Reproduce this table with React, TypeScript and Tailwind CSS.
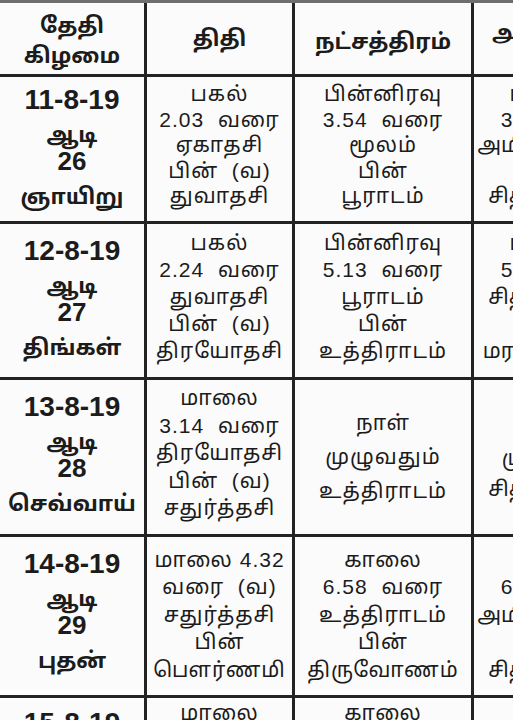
const FONT = "font-['Liberation_Sans','Noto_Sans_Tamil','Noto_Sans',sans-serif]";

type Row = {
  date: string;
  month: string;
  day: string;
  weekday: string;
  h: string;
  pt: string;
  lead: string;
  pb: string;
  thithi: string[];
  star: string[];
  yogam: string[];
  starLead?: string;
  yogamLead?: string;
  cut?: boolean;
};

const rows: Row[] = [
  {
    date: "11-8-19",
    month: "ஆடி",
    day: "26",
    weekday: "ஞாயிறு",
    h: "h-[144px]",
    pt: "pt-[8px]",
    lead: "leading-[25.5px]",
    pb: "pb-[8px]",
    thithi: ["பகல்", "2.03  வரை", "ஏகாதசி", "பின்  (வ)", "துவாதசி"],
    star: ["பின்னிரவு", "3.54  வரை", "மூலம்", "பின்", "பூராடம்"],
    yogam: ["பிற்பகல்", "3.54  வரை", "அமிர்தயோகம்", "பின்", "சித்தயோகம்"],
  },
  {
    date: "12-8-19",
    month: "ஆடி",
    day: "27",
    weekday: "திங்கள்",
    h: "h-[153px]",
    pt: "pt-[12px]",
    lead: "leading-[27px]",
    pb: "pb-[8px]",
    thithi: ["பகல்", "2.24  வரை", "துவாதசி", "பின்  (வ)", "திரயோதசி"],
    star: ["பின்னிரவு", "5.13  வரை", "பூராடம்", "பின்", "உத்திராடம்"],
    yogam: ["பிற்பகல்", "5.13  வரை", "சித்தயோகம்", "பின்", "மரணயோகம்"],
  },
  {
    date: "13-8-19",
    month: "ஆடி",
    day: "28",
    weekday: "செவ்வாய்",
    h: "h-[154px]",
    pt: "pt-[12px]",
    lead: "leading-[27.5px]",
    pb: "pb-[8px]",
    thithi: ["மாலை", "3.14  வரை", "திரயோதசி", "பின்  (வ)", "சதுர்த்தசி"],
    star: ["நாள்", "முழுவதும்", "உத்திராடம்"],
    yogam: ["நாள்", "முழுவதும்", "சித்தயோகம்"],
    starLead: "leading-[34px]",
    yogamLead: "leading-[31px]",
  },
  {
    date: "14-8-19",
    month: "ஆடி",
    day: "29",
    weekday: "புதன்",
    h: "h-[158px]",
    pt: "pt-[12px]",
    lead: "leading-[27.5px]",
    pb: "pb-[3px]",
    thithi: ["மாலை 4.32", "வரை  (வ)", "சதுர்த்தசி", "பின்", "பௌர்ணமி"],
    star: ["காலை", "6.58  வரை", "உத்திராடம்", "பின்", "திருவோணம்"],
    yogam: ["காலை", "6.58  வரை", "அமிர்தயோகம்", "பின்", "சித்தயோகம்"],
  },
  {
    date: "15-8-19",
    month: "ஆடி",
    day: "30",
    weekday: "வியாழன்",
    h: "h-[158px]",
    pt: "pt-[10px]",
    lead: "leading-[27px]",
    pb: "",
    thithi: ["மாலை", "5.27  வரை", "பௌர்ணமி", "பின்", "பிரதமை"],
    star: ["காலை", "8.52  வரை", "திருவோணம்", "பின்", "அவிட்டம்"],
    yogam: ["காலை", "8.52  வரை", "சித்தயோகம்", "பின்", "அமிர்தயோகம்"],
    cut: true,
  },
];

function Lines({
  lines,
  lead,
  pb,
  cut,
  tight,
}: {
  lines: string[];
  lead: string;
  pb: string;
  cut?: boolean;
  tight?: boolean;
}) {
  return (
    <div
      className={`flex h-full flex-col items-center bg-[#fbfbfb] text-center text-[21px] whitespace-pre text-[#1c1c1c] ${lead} ${
        tight ? "tracking-normal" : "tracking-[1px]"
      } ${cut ? "justify-start pt-[1px]" : `justify-center ${pb}`}`}
    >
      {lines.map((l, i) => (
        <span key={i}>{l}</span>
      ))}
    </div>
  );
}

export default function App() {
  return (
    <div className={`w-[513px] h-[720px] overflow-hidden bg-[#fbfbfb] ${FONT}`}>
      <div className="w-[640px] border-t-[3px] border-[#6e6e6e] bg-[#232323]">
        <div className="grid grid-cols-[144px_145px_176px_166px] gap-[3px]">
          <div className="flex h-[71px] flex-col items-center justify-center bg-[#fbfbfb] pt-[4px] text-[22px] font-bold leading-[30px] text-[#1c1c1c]">
            <span>தேதி</span>
            <span>கிழமை</span>
          </div>
          <div className="flex h-[71px] items-center justify-center bg-[#fbfbfb] text-[22px] font-bold text-[#1c1c1c]">
            திதி
          </div>
          <div className="flex h-[71px] items-center justify-center bg-[#fbfbfb] pt-[6px] text-[22px] font-bold text-[#1c1c1c]">
            நட்சத்திரம்
          </div>
          <div className="flex h-[71px] items-center justify-center bg-[#fbfbfb] pb-[12px] text-[22px] font-bold text-[#1c1c1c]">
            அமிர்தாதி
          </div>

          {rows.map((r) => (
            <div key={r.date} className="contents">
              <div className={`flex flex-col items-center bg-[#fbfbfb] font-bold text-[#1c1c1c] ${r.pt} ${r.h}`}>
                <span className="text-[28px] leading-[30px]">{r.date}</span>
                <span className="mt-[9px] text-[22px] leading-[22px]">{r.month}</span>
                <span className="mt-[3px] text-[26px] leading-[24px]">{r.day}</span>
                <span className="mt-[12px] text-[22px] leading-[24px]">{r.weekday}</span>
              </div>
              <div className={r.h}>
                <Lines lines={r.thithi} lead={r.lead} pb={r.pb} cut={r.cut} />
              </div>
              <div className={r.h}>
                <Lines lines={r.star} lead={r.starLead ?? r.lead} pb={r.starLead ? "" : r.pb} cut={r.cut} />
              </div>
              <div className={r.h}>
                <Lines lines={r.yogam} lead={r.yogamLead ?? r.lead} pb={r.yogamLead ? "" : r.pb} cut={r.cut} tight />
              </div>
            </div>
          ))}
        </div>
      </div>
    </div>
  );
}
